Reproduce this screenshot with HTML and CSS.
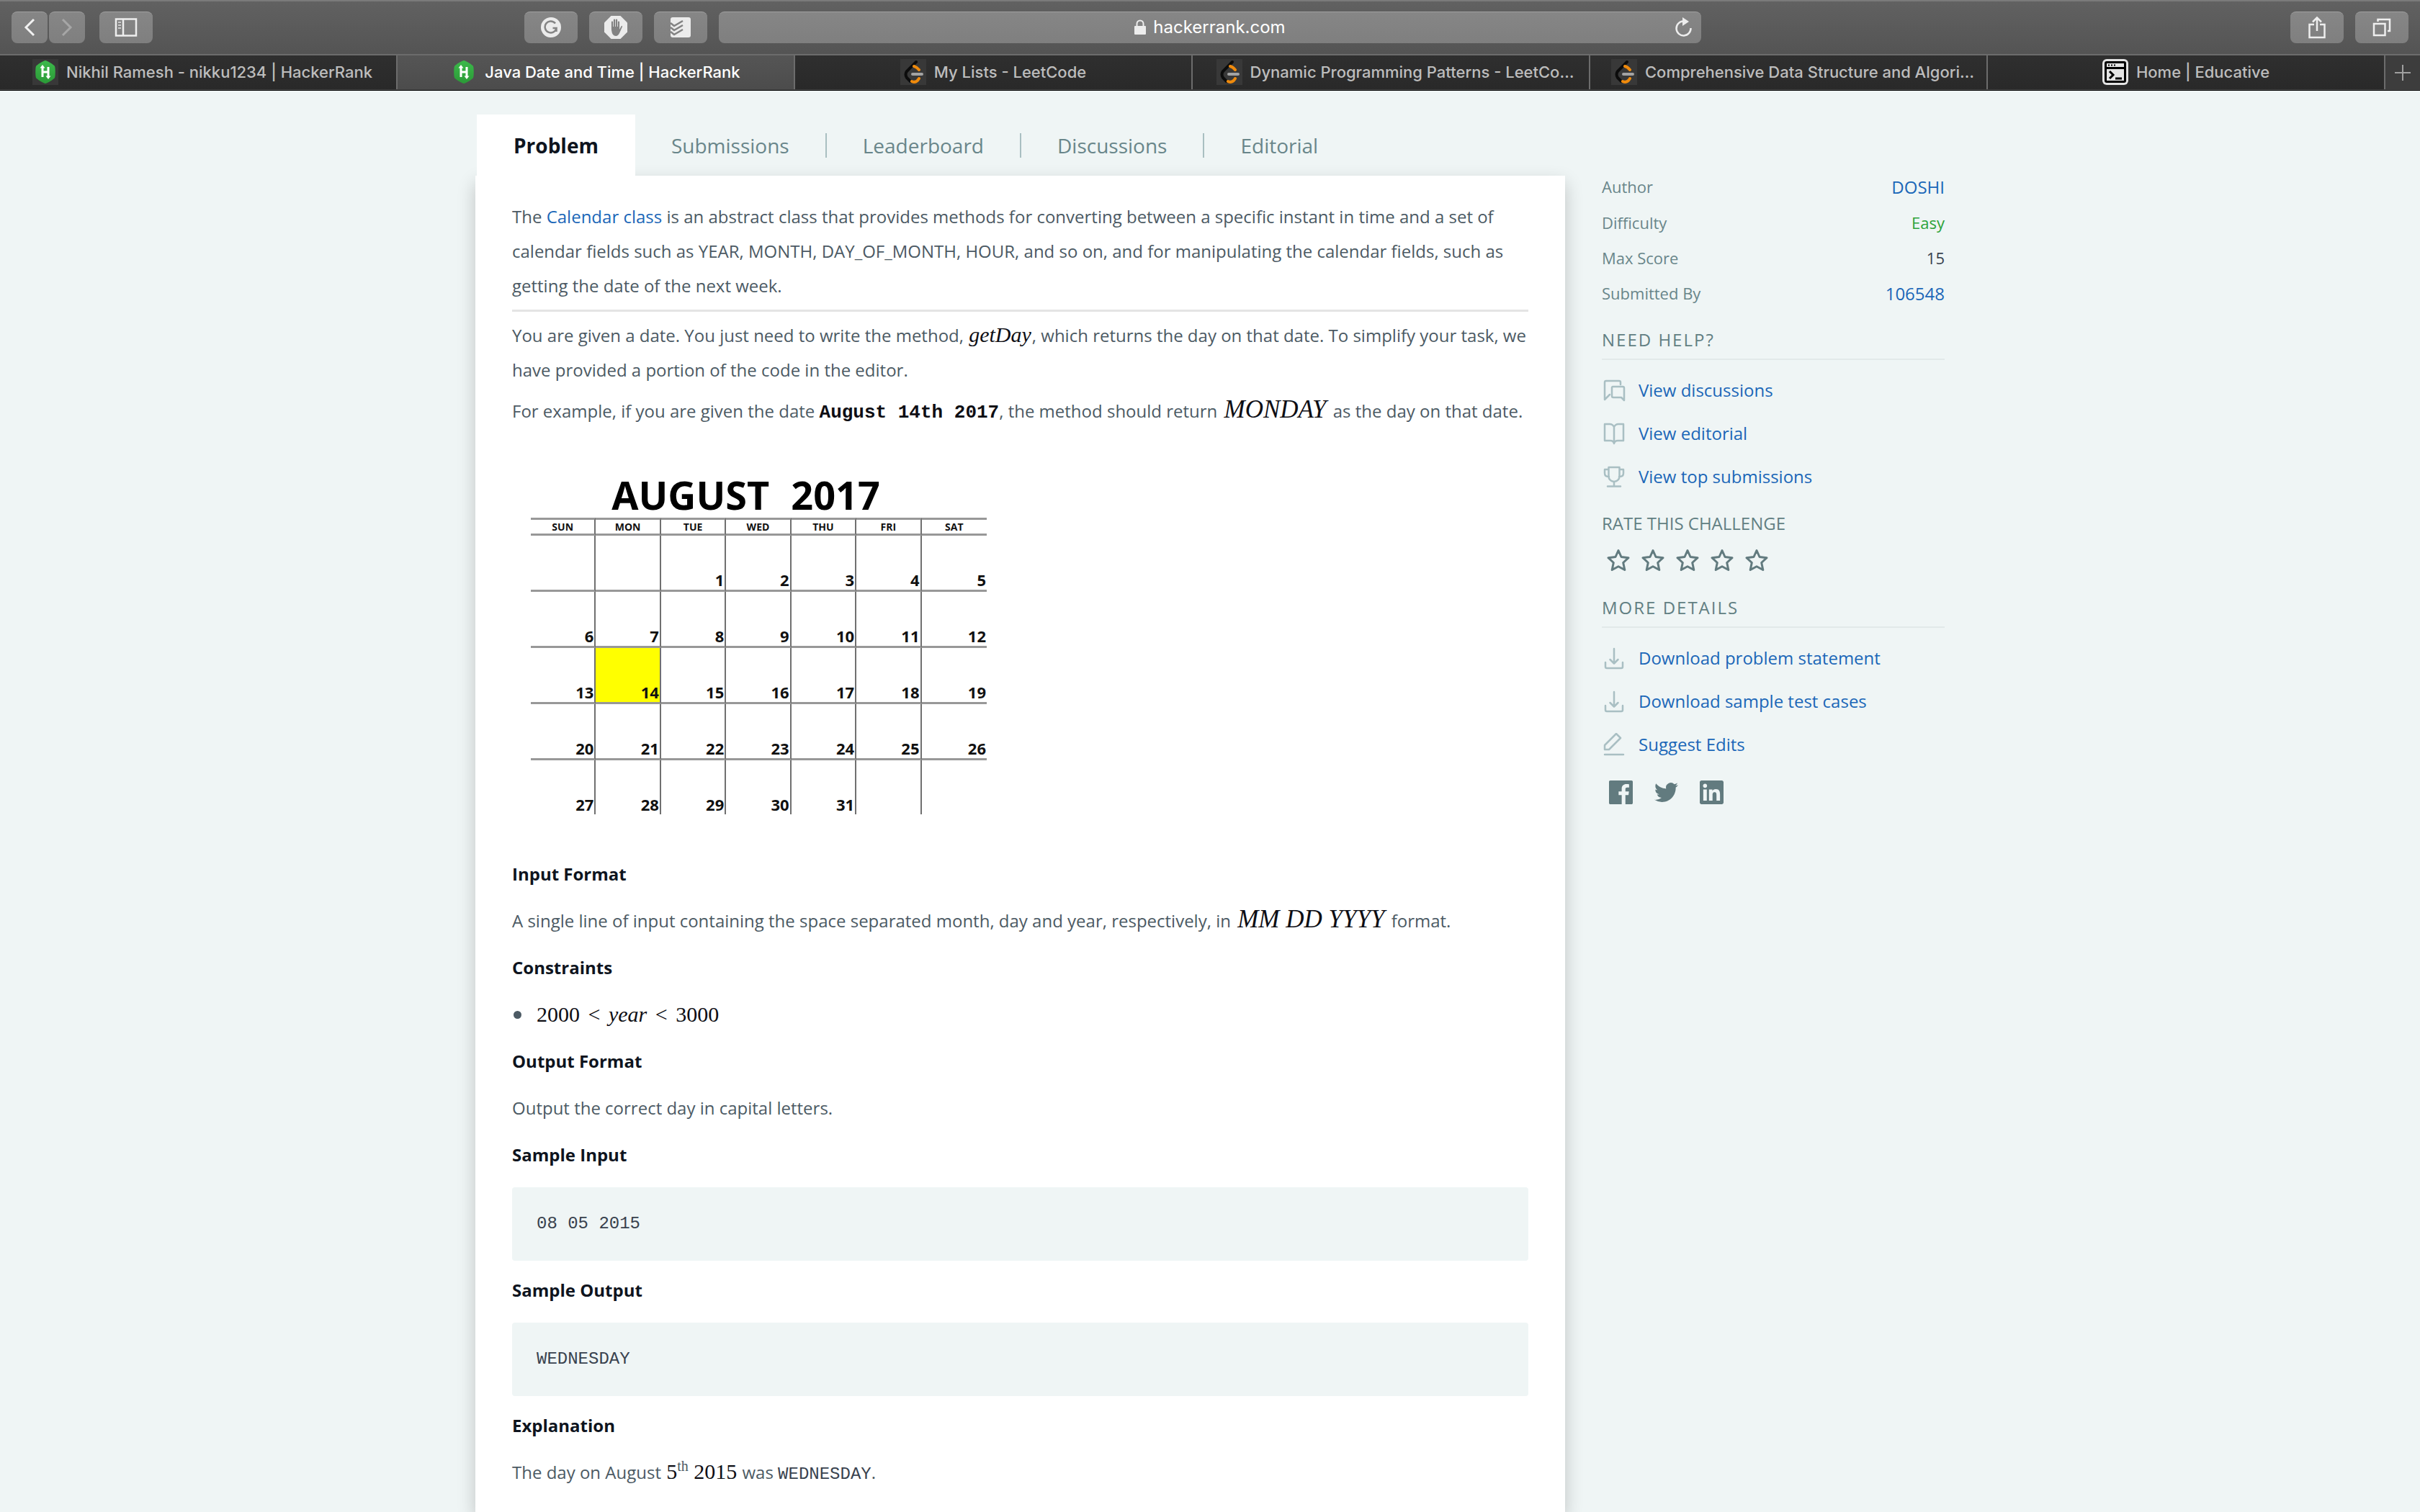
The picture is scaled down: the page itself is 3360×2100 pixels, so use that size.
FILE: index.html
```html
<!DOCTYPE html>
<html lang="en">
<head>
<meta charset="utf-8">
<meta name="viewport" content="width=device-width, initial-scale=1">
<title>Java Date and Time | HackerRank</title>
<link rel="stylesheet" href="styles.css">
</head>
<body>
<svg class="defs" width="0" height="0" aria-hidden="true">
  <defs>
    <linearGradient id="green" x1="0" y1="0" x2="0" y2="1">
      <stop offset="0" stop-color="#3cb94b"/><stop offset="1" stop-color="#2b9a37"/>
    </linearGradient>
    <symbol id="hackerrank" viewBox="0 0 36 36">
      <path d="M18 2c2 0 12 6 13 8 1 2 1 14 0 16s-11 8-13 8-12-6-13-8c-1-2-1-14 0-16s11-8 13-8z" fill="url(#green)"/>
      <path d="M14 11v14M22 11v14M14 18h8" fill="none" stroke="#fff" stroke-width="3"/>
      <path d="M10.500 12.500 14 8l3.500 4.500zM18.500 23.500 22 28l3.500-4.500z" fill="#fff"/>
    </symbol>
    <symbol id="leetcode" viewBox="0 0 36 36">
      <rect width="36" height="36" fill="#383838"/>
      <path d="M22 4 9 17q-3 4 0 9l5 5" fill="none" stroke="#0c0c0c" stroke-width="4" stroke-linecap="round"/>
      <path d="M19 10q4 1 7 5M16 31q6 3 10-4" fill="none" stroke="#ef8a0c" stroke-width="4" stroke-linecap="round"/>
      <path d="M17 21h13" stroke="#a3a3a3" stroke-width="4" stroke-linecap="round"/>
    </symbol>
    <symbol id="star" viewBox="0 0 32 32">
      <path d="M16 2.500 20 11.500 30 12.700 22.700 19.500 24.800 29.500 16 24.800 7.200 29.500 9.300 19.500 2 12.700 12 11.500z" fill="none" stroke="currentColor" stroke-width="3" stroke-linejoin="round"/>
    </symbol>
    <symbol id="download" viewBox="0 0 32 32">
      <path d="M16 3v20M10.500 18l5.500 5.500 5.500-5.500M4 22v6q0 2 2 2h20q2 0 2-2v-6" fill="none" stroke="currentColor" stroke-width="2.500" stroke-linecap="round" stroke-linejoin="round"/>
    </symbol>
  </defs>
</svg>

<header class="browser">
  <div class="toolbar">
    <div class="toolbar__side toolbar__side--left">
      <div class="history">
        <button class="tool tool--narrow" type="button" aria-label="Back"><svg width="20" height="28" viewBox="0 0 20 28"><path d="M16 3 5 14l11 11" fill="none" stroke="#f2f2f2" stroke-width="3"/></svg></button>
        <button class="tool tool--narrow" type="button" aria-label="Forward"><svg width="20" height="28" viewBox="0 0 20 28"><path d="m4 3 11 11L4 25" fill="none" stroke="#a6a6a6" stroke-width="3"/></svg></button>
      </div>
      <button class="tool tool--sidebar" type="button" aria-label="Show sidebar"><svg width="32" height="26" viewBox="0 0 32 26"><path d="M2 1.500h28v23H2zM12 2v22" fill="none" stroke="#eee" stroke-width="2.500"/><path d="M5 6h4M5 10h4M5 14h4" stroke="#ccc" stroke-width="2"/></svg></button>
      <div class="extensions">
        <button class="tool" type="button" aria-label="Grammarly"><svg width="30" height="30" viewBox="0 0 30 30"><circle cx="15" cy="15" r="14" fill="#ebebeb"/><path d="M21 9.500a8 8 0 1 0 1.500 6.500h-5M22.500 16v5" fill="none" stroke="#858585" stroke-width="2.500"/></svg></button>
        <button class="tool" type="button" aria-label="Content blocker"><svg width="34" height="34" viewBox="0 0 34 34"><path d="M10.500 1h13L33 10.500v13L23.500 33h-13L1 23.500v-13z" fill="#ebebeb"/><path d="M12 20V9.500M15 16V6.500M18 16V6.500M21 18V9.500" stroke="#828282" stroke-width="2.200" stroke-linecap="round"/><path d="M11 16h11v4l2.500-4.500q1.500-1.500 1.500.5l-3.500 8Q20.500 29 17 29q-5 0-6-8z" fill="#828282"/></svg></button>
        <button class="tool" type="button" aria-label="Todoist"><svg width="30" height="30" viewBox="0 0 30 30"><rect x="1" y="1" width="28" height="28" rx="3" fill="#ebebeb"/><path d="m1 9 5 4L18 6M1 15l5 4 12-7M1 21l5 4 12-7" fill="none" stroke="#828282" stroke-width="2.500"/></svg></button>
      </div>
    </div>
    <div class="address">
      <label class="address__field">
        <svg width="16" height="22" viewBox="0 0 16 22"><path d="M3.500 10V6a4.500 4.500 0 0 1 9 0v4" fill="none" stroke="#ededed" stroke-width="2"/><rect y="9" width="16" height="12" rx="1" fill="#ededed"/></svg>
        <input class="address__input" type="text" value="hackerrank.com" size="14" aria-label="Address">
      </label>
      <button class="address__reload" type="button" aria-label="Reload"><svg width="26" height="28" viewBox="0 0 26 28"><path d="M13 5.500a10 10 0 1 0 10.500 9.500" fill="none" stroke="#ededed" stroke-width="2.500"/><path d="m12 0 9 6-9 6z" fill="#ededed"/></svg></button>
    </div>
    <div class="toolbar__side toolbar__side--right">
      <button class="tool" type="button" aria-label="Share"><svg width="26" height="32" viewBox="0 0 26 32"><path d="M9 12H2.500v18h21V12H17M13 21V3M7 8.500l6-6 6 6" fill="none" stroke="#eee" stroke-width="2.500"/></svg></button>
      <button class="tool" type="button" aria-label="Tab overview"><svg width="28" height="28" viewBox="0 0 28 28"><path d="M3 9h15.500v16H3zM8.500 6V3H25v16h-3" fill="none" stroke="#eee" stroke-width="2.500"/></svg></button>
    </div>
  </div>
  <nav class="tabs" aria-label="Open tabs">
    <a class="tab tab--long" href="#"><svg class="tab__icon tab__icon--boxed"><use href="#hackerrank"/></svg><span>Nikhil Ramesh - nikku1234 | HackerRank</span></a>
    <a class="tab tab--active" href="#" aria-current="page"><svg class="tab__icon"><use href="#hackerrank"/></svg><span>Java Date and Time | HackerRank</span></a>
    <a class="tab" href="#"><svg class="tab__icon"><use href="#leetcode"/></svg><span>My Lists - LeetCode</span></a>
    <a class="tab tab--long" href="#"><svg class="tab__icon"><use href="#leetcode"/></svg><span>Dynamic Programming Patterns - LeetCo…</span></a>
    <a class="tab tab--long" href="#"><svg class="tab__icon"><use href="#leetcode"/></svg><span>Comprehensive Data Structure and Algori…</span></a>
    <a class="tab" href="#"><svg class="tab__icon" viewBox="0 0 36 36"><rect width="36" height="36" rx="6" fill="#e4e4e4"/><rect x="3" y="3" width="30" height="30" rx="3" fill="#000"/><rect x="6" y="6" width="24" height="5" fill="#e4e4e4"/><rect x="6" y="14" width="24" height="16" fill="#e4e4e4"/><path d="M8 8.500h2M12 8.500h2M16 8.500h2" stroke="#000" stroke-width="2"/><path d="m10 17 5 5-5 5M18 27h9" fill="none" stroke="#000" stroke-width="3"/></svg><span>Home | Educative</span></a>
    <button class="tabs__new" type="button" aria-label="New tab"><svg width="22" height="22" viewBox="0 0 22 22"><path d="M11 0v22M0 11h22" stroke="#a0a0a0" stroke-width="2"/></svg></button>
  </nav>
</header>

<div class="page">
  <main class="challenge">
    <nav class="sections" aria-label="Challenge sections">
      <a class="section section--active" href="#" aria-current="page">Problem</a>
      <a class="section" href="#">Submissions</a>
      <a class="section section--ruled" href="#">Leaderboard</a>
      <a class="section section--ruled" href="#">Discussions</a>
      <a class="section section--ruled" href="#">Editorial</a>
    </nav>
    <article class="card">
      <div class="intro">
        <p>The <a href="#">Calendar class</a> is an abstract class that provides methods for converting between a specific instant in time and a set of calendar fields such as YEAR, MONTH, DAY_OF_MONTH, HOUR, and so on, and for manipulating the calendar fields, such as getting the date of the next week.</p>
        <hr>
        <p>You are given a date. You just need to write the method, <i class="math">getDay</i>, which returns the day on that date. To simplify your task, we have provided a portion of the code in the editor.</p>
        <p>For example, if you are given the date <b class="typewriter">August 14th 2017</b>, the method should return <i class="math math--caps">MONDAY</i> as the day on that date.</p>
      </div>
      <table class="calendar">
        <caption class="calendar__title"><span>AUGUST</span> <span>2017</span></caption>
        <thead>
          <tr><th scope="col">SUN</th><th scope="col">MON</th><th scope="col">TUE</th><th scope="col">WED</th><th scope="col">THU</th><th scope="col">FRI</th><th scope="col">SAT</th></tr>
        </thead>
        <tbody>
          <tr><td></td><td></td><td>1</td><td>2</td><td>3</td><td>4</td><td>5</td></tr>
          <tr><td>6</td><td>7</td><td>8</td><td>9</td><td>10</td><td>11</td><td>12</td></tr>
          <tr><td>13</td><td class="calendar__marked">14</td><td>15</td><td>16</td><td>17</td><td>18</td><td>19</td></tr>
          <tr><td>20</td><td>21</td><td>22</td><td>23</td><td>24</td><td>25</td><td>26</td></tr>
          <tr><td>27</td><td>28</td><td>29</td><td>30</td><td>31</td><td></td><td></td></tr>
        </tbody>
      </table>
      <div class="details">
        <h2>Input Format</h2>
        <p>A single line of input containing the space separated month, day and year, respectively, in <i class="math math--caps">MM DD YYYY</i> format.</p>
        <h2>Constraints</h2>
        <ul>
          <li><span class="math">2000 <span class="math__relation">&lt;</span> <i>year</i> <span class="math__relation">&lt;</span> 3000</span></li>
        </ul>
        <h2>Output Format</h2>
        <p>Output the correct day in capital letters.</p>
        <h2>Sample Input</h2>
        <pre>08 05 2015</pre>
        <h2>Sample Output</h2>
        <pre>WEDNESDAY</pre>
        <h2>Explanation</h2>
        <p>The day on August <span class="math">5<sup>th</sup> 2015</span> was <code>WEDNESDAY</code>.</p>
      </div>
    </article>
  </main>

  <aside class="sidebar">
    <dl class="facts">
      <div><dt>Author</dt><dd><a href="#">DOSHI</a></dd></div>
      <div><dt>Difficulty</dt><dd class="facts__easy">Easy</dd></div>
      <div><dt>Max Score</dt><dd>15</dd></div>
      <div><dt>Submitted By</dt><dd><a href="#">106548</a></dd></div>
    </dl>
    <h3 class="heading heading--ruled">NEED HELP?</h3>
    <ul class="links">
      <li><svg class="links__icon" viewBox="0 0 32 32"><path d="M25 8V5q0-2-2-2H5Q3 3 3 5v24l7-7M14 11h14q2 0 2 2v17l-4-4H15q-2 0-2-2V12z" fill="none" stroke="currentColor" stroke-width="2.500" stroke-linejoin="round" stroke-linecap="round"/></svg><a href="#">View discussions</a></li>
      <li><svg class="links__icon" viewBox="0 0 32 32"><path d="M16 7q-2-4-6-4H3v23h8q4 0 5 4 1-4 5-4h8V3h-7q-4 0-6 4zM16 7v22" fill="none" stroke="currentColor" stroke-width="2.500" stroke-linejoin="round"/></svg><a href="#">View editorial</a></li>
      <li><svg class="links__icon" viewBox="0 0 32 32"><path d="M8.500 3h15v12q0 7-7.500 8-7.500-1-7.500-8zM8 6H3v5q0 5 5 5h1M24 6h5v5q0 5-5 5h-1M16 23v6M7 29.500h18" fill="none" stroke="currentColor" stroke-width="2.500" stroke-linejoin="round" stroke-linecap="round"/></svg><a href="#">View top submissions</a></li>
    </ul>
    <h3 class="heading heading--rate">RATE THIS CHALLENGE</h3>
    <div class="stars">
      <button type="button" aria-label="1 star"><svg><use href="#star"/></svg></button>
      <button type="button" aria-label="2 stars"><svg><use href="#star"/></svg></button>
      <button type="button" aria-label="3 stars"><svg><use href="#star"/></svg></button>
      <button type="button" aria-label="4 stars"><svg><use href="#star"/></svg></button>
      <button type="button" aria-label="5 stars"><svg><use href="#star"/></svg></button>
    </div>
    <h3 class="heading heading--ruled">MORE DETAILS</h3>
    <ul class="links">
      <li><svg class="links__icon"><use href="#download"/></svg><a href="#">Download problem statement</a></li>
      <li><svg class="links__icon"><use href="#download"/></svg><a href="#">Download sample test cases</a></li>
      <li><svg class="links__icon" viewBox="0 0 32 32"><path d="M3 23v-6L19 1l6 6L9 23zM3 30h26" fill="none" stroke="currentColor" stroke-width="2.500" stroke-linejoin="round" stroke-linecap="round"/></svg><a href="#">Suggest Edits</a></li>
    </ul>
    <div class="social">
      <a href="#" aria-label="Share on Facebook"><svg viewBox="0 0 24 24"><path fill="currentColor" d="M22.676 0H1.324C.593 0 0 .593 0 1.324v21.352C0 23.408.593 24 1.324 24h11.494v-9.294H9.689v-3.621h3.129V8.410c0-3.099 1.894-4.785 4.659-4.785 1.325 0 2.464.097 2.796.141v3.240h-1.921c-1.500 0-1.792.721-1.792 1.771v2.311h3.584l-.465 3.630H16.560V24h6.115c.733 0 1.325-.592 1.325-1.324V1.324C24 .593 23.408 0 22.676 0"/></svg></a>
      <a href="#" aria-label="Share on Twitter"><svg viewBox="0 0 24 24"><path fill="currentColor" d="M23.953 4.570a10 10 0 01-2.825.775 4.958 4.958 0 002.163-2.723c-.951.555-2.005.959-3.127 1.184a4.920 4.920 0 00-8.384 4.482C7.690 8.095 4.067 6.130 1.640 3.162a4.822 4.822 0 00-.666 2.475c0 1.710.870 3.213 2.188 4.096a4.904 4.904 0 01-2.228-.616v.060a4.923 4.923 0 003.946 4.827 4.996 4.996 0 01-2.212.085 4.936 4.936 0 004.604 3.417 9.867 9.867 0 01-6.102 2.105c-.390 0-.779-.023-1.170-.067a13.995 13.995 0 007.557 2.209c9.053 0 13.998-7.496 13.998-13.985 0-.210 0-.420-.015-.630A9.935 9.935 0 0024 4.590z"/></svg></a>
      <a href="#" aria-label="Share on LinkedIn"><svg viewBox="0 0 24 24"><path fill="currentColor" d="M20.447 20.452h-3.554v-5.569c0-1.328-.027-3.037-1.852-3.037-1.853 0-2.136 1.445-2.136 2.939v5.667H9.351V9h3.414v1.561h.046c.477-.9 1.637-1.850 3.370-1.850 3.601 0 4.267 2.370 4.267 5.455v6.286zM5.337 7.433c-1.144 0-2.063-.926-2.063-2.065 0-1.138.920-2.063 2.063-2.063 1.140 0 2.064.925 2.064 2.063 0 1.139-.925 2.065-2.064 2.065zm1.782 13.019H3.555V9h3.564v11.452zM22.225 0H1.771C.792 0 0 .774 0 1.729v20.542C0 23.227.792 24 1.771 24h20.451C23.200 24 24 23.227 24 22.271V1.729C24 .774 23.200 0 22.222 0h.003z"/></svg></a>
    </div>
  </aside>
</div>
</body>
</html>
```

FILE: styles.css
```css
*,
*::before,
*::after {
  box-sizing: border-box;
}

body {
  margin: 0;
  min-height: 100vh;
  display: flex;
  flex-direction: column;
  background: #eff5f5;
  color: #4c5a64;
  font: 24px/48px "Open Sans", sans-serif;
}

h2,
h3,
p,
ul,
dl,
dd,
pre {
  margin: 0;
  padding: 0;
}

ul {
  list-style: none;
}

a {
  color: #1b67b8;
  text-decoration: none;
}

button {
  padding: 0;
  border: 0;
  background: none;
  color: inherit;
  font: inherit;
}

svg {
  display: block;
  flex: none;
}

.defs {
  position: absolute;
}

/* Browser window */

.browser {
  border-bottom: 1px solid #000;
  font-family: Inter, sans-serif;
}

.toolbar {
  display: grid;
  grid-template-columns: 1fr minmax(600px, 41%) 1fr;
  column-gap: 16px;
  align-items: center;
  height: 75px;
  padding: 0 16px 2px;
  border-top: 2px solid #7b7b7b;
  background: linear-gradient(#616161, #545454);
}

.toolbar__side,
.history,
.extensions {
  display: flex;
  gap: 16px;
}

.toolbar__side--right {
  justify-content: flex-end;
}

.history {
  gap: 2px;
}

.tool--sidebar {
  margin-left: 4px;
}

.extensions {
  margin-left: auto;
}

.tool {
  display: grid;
  place-items: center;
  width: 74px;
  height: 44px;
  border-top: 1px solid #a0a0a0;
  border-radius: 8px;
  background: linear-gradient(#868686, #7f7f7f);
}

.tool--narrow {
  width: 50px;
}

.address {
  display: flex;
  align-items: center;
  height: 44px;
  padding: 0 12px 0 38px;
  border-top: 1px solid #a0a0a0;
  border-radius: 8px;
  background: linear-gradient(#868686, #7f7f7f);
}

.address__field {
  flex: 1;
  display: flex;
  justify-content: center;
  align-items: center;
  gap: 10px;
}

.address__input {
  field-sizing: content;
  padding: 0;
  border: 0;
  outline: 0;
  background: none;
  color: #fff;
  font: 24px/32px Inter, sans-serif;
}

.tabs {
  display: grid;
  grid-template-columns: repeat(6, minmax(0, 1fr)) 48px;
  height: 50px;
  border-top: 2px solid #6c6c6c;
  border-bottom: 1px solid #4a4a4a;
  background: linear-gradient(#2f2f2f, #292929);
}

.tab {
  display: flex;
  justify-content: center;
  align-items: center;
  gap: 11px;
  padding: 0 24px 1px;
  border-right: 2px solid #6c6c6c;
  color: #bdbdbd;
  font-size: 22px;
  font-weight: 500;
  line-height: 32px;
  white-space: nowrap;
}

.tab--long {
  padding-left: 36px;
}

.tab--active {
  background: linear-gradient(#555, #4c4c4c);
  color: #fff;
}

.tab__icon {
  width: 36px;
  height: 36px;
}

.tab__icon--boxed {
  background: #383838;
}

.tabs__new {
  display: grid;
  place-items: center;
  background: #3d3d3d;
}

/* Page columns */

.page {
  flex: 1;
  display: flex;
  gap: 51px;
  width: 100%;
  max-width: 2040px;
  margin: 0 auto;
}

.challenge {
  flex: 1;
  min-width: 0;
  display: flex;
  flex-direction: column;
  padding-top: 33px;
}

.sections {
  z-index: 1;
  display: flex;
  padding-left: 2px;
}

.section {
  display: flex;
  align-items: center;
  height: 85px;
  padding: 0 50px;
  color: #69868a;
  font-size: 28px;
  line-height: 34px;
}

.section--active {
  padding: 0 51px;
  background: #fff;
  color: #0e141e;
  font-weight: 700;
}

.section--ruled {
  padding-left: 0;
}

.section--ruled::before {
  content: "";
  width: 2px;
  height: 34px;
  margin-right: 50px;
  background: #a9bfc1;
}

.card {
  flex: 1;
  padding: 33px 51px 24px;
  background: #fff;
  box-shadow: 0 10px 24px rgba(0, 0, 0, 0.2);
}

.intro {
  display: grid;
  gap: 9px;
}

.intro hr {
  width: 100%;
  height: 3px;
  margin: 0;
  border: 0;
  background: #e4e4e4;
}

.math {
  padding: 0 1px;
  color: #0e0e14;
  font-family: "Liberation Serif", serif;
  font-size: 30px;
  line-height: 24px;
}

.math--caps {
  padding: 0 3px;
  font-size: 35px;
}

.math__relation {
  padding: 0 4px;
}

.math sup {
  color: #4c5a64;
  font-size: 20px;
  line-height: 1;
}

.typewriter {
  color: #0e0e14;
  font-family: "Liberation Mono", monospace;
  font-size: 26px;
  line-height: 24px;
}

code {
  color: #39424e;
  font: 24px/24px "Liberation Mono", monospace;
}

/* Calendar illustration */

.calendar {
  width: 633px;
  max-width: 100%;
  margin: 60px 26px 59px;
  table-layout: fixed;
  border-spacing: 0;
  color: #111;
  line-height: 28px;
}

.calendar__title {
  height: 64px;
  padding-right: 36px;
  color: #000;
  font-size: 54px;
  font-weight: 700;
  line-height: 64px;
}

.calendar__title span + span {
  margin-left: 16px;
}

.calendar th,
.calendar td {
  border-right: 2px solid #707070;
  border-bottom: 3px solid #989898;
}

.calendar th:last-child,
.calendar td:last-child {
  border-right: 0;
}

.calendar th {
  height: 25px;
  padding: 0;
  border-top: 3px solid #989898;
  font-size: 14px;
  line-height: 19px;
}

.calendar td {
  height: 78px;
  padding: 0 1px 0 0;
  font-size: 22px;
  font-weight: 700;
  text-align: right;
  vertical-align: bottom;
}

.calendar tr:last-child td {
  height: 75px;
  border-bottom: 0;
}

.calendar .calendar__marked {
  background: #ff0;
}

/* Formats and samples */

.details {
  display: grid;
  gap: 17px;
}

.details h2 {
  color: #0e141e;
  font-size: 24px;
  font-weight: 700;
  line-height: 48px;
}

.details li {
  display: flex;
  align-items: center;
  gap: 20px;
  min-height: 48px;
  padding-left: 2px;
}

.details li::before {
  content: "";
  width: 11px;
  height: 11px;
  border-radius: 50%;
  background: #4c5a64;
}

.details pre {
  margin-top: 4px;
  padding: 27px 34px;
  border-radius: 4px;
  background: #eff5f5;
  color: #39424e;
  font: 24px/48px "Liberation Mono", monospace;
}

/* Sidebar */

.sidebar {
  width: 476px;
  padding-top: 109px;
}

.facts div {
  display: flex;
  justify-content: space-between;
  font-size: 22px;
  line-height: 49px;
}

.facts dt {
  color: #69868a;
}

.facts dd {
  color: #39424e;
}

.facts a {
  font-size: 24px;
}

.facts .facts__easy {
  color: #2da33a;
}

.heading {
  color: #627f83;
  font-size: 24px;
  font-weight: 400;
  line-height: 34px;
}

.heading--ruled {
  margin: 22px 0 12px;
  padding-bottom: 9px;
  border-bottom: 2px solid #e2e9e9;
  letter-spacing: 2px;
}

.heading--rate {
  margin: 18px 0;
}

.links li {
  display: flex;
  align-items: center;
  gap: 17px;
  height: 60px;
}

.links__icon {
  width: 34px;
  height: 32px;
  color: #a9bfc3;
}

.stars {
  display: flex;
  gap: 16px;
  padding-left: 7px;
  margin-bottom: 33px;
  color: #627b7f;
}

.stars svg {
  width: 32px;
  height: 32px;
}

.social {
  display: flex;
  gap: 30px;
  padding: 20px 0 0 10px;
}

.social a {
  color: #627b7f;
}

.social svg {
  width: 33px;
  height: 33px;
}
```
